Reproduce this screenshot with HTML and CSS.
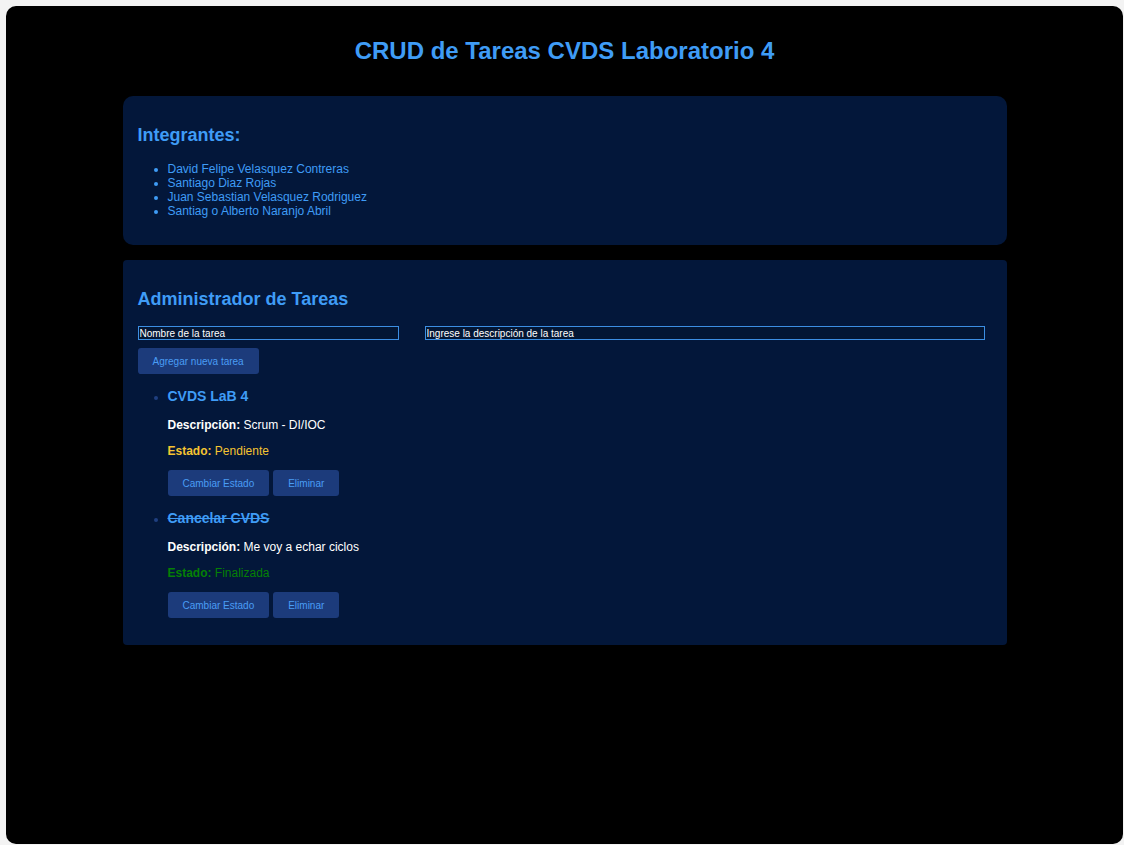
FILE: index.html
```html
<!DOCTYPE html>
<html lang="es">
<head>
<meta charset="utf-8">
<title>CRUD de Tareas</title>
<link rel="stylesheet" href="styles.css">
</head>
<body>
<div class="app">
  <h1 class="title">CRUD de Tareas CVDS Laboratorio 4</h1>
  <section class="card card-round">
    <h3 class="card-title">Integrantes:</h3>
    <ul class="members">
      <li>David Felipe Velasquez Contreras</li>
      <li>Santiago Diaz Rojas</li>
      <li>Juan Sebastian Velasquez Rodriguez</li>
      <li>Santiag o Alberto Naranjo Abril</li>
    </ul>
  </section>
  <section class="card">
    <h3 class="card-title">Administrador de Tareas</h3>
    <div class="form">
      <input class="input input-name" type="text" value="Nombre de la tarea">
      <input class="input input-desc" type="text" value="Ingrese la descripción de la tarea">
    </div>
    <button class="btn">Agregar nueva tarea</button>
    <ul class="tasks">
      <li class="task">
        <h4 class="task-title">CVDS LaB 4</h4>
        <p class="task-desc"><strong>Descripción:</strong> Scrum - DI/IOC</p>
        <p class="task-state pending"><strong>Estado:</strong> Pendiente</p>
        <div class="actions">
          <button class="btn">Cambiar Estado</button>
          <button class="btn">Eliminar</button>
        </div>
      </li>
      <li class="task">
        <h4 class="task-title done">Cancelar CVDS</h4>
        <p class="task-desc"><strong>Descripción:</strong> Me voy a echar ciclos</p>
        <p class="task-state finished"><strong>Estado:</strong> Finalizada</p>
        <div class="actions">
          <button class="btn">Cambiar Estado</button>
          <button class="btn">Eliminar</button>
        </div>
      </li>
    </ul>
  </section>
</div>
</body>
</html>
```
FILE: styles.css
```css
html, body {
  margin: 0;
  padding: 0;
  background: #f3f3f3;
}
body {
  padding: 6px 1px 1px 6px;
  font-family: "Liberation Sans", Arial, sans-serif;
}
.app {
  background: #000;
  height: 838px;
  border-radius: 10px;
  display: flow-root;
  box-sizing: border-box;
}
.title {
  margin: 31px 0 0;
  text-align: center;
  font-size: 24px;
  line-height: 28px;
  font-weight: bold;
  color: #3f9cf6;
}
.card {
  width: 884px;
  box-sizing: border-box;
  margin: 0 auto;
  background: #03173a;
  border-radius: 4px;
  padding: 11px 15px 15px;
  display: flow-root;
}
.card-round {
  margin-top: 31px;
  margin-bottom: 15px;
  border-radius: 10px;
}
.card-title {
  margin: 18px 0 16px;
  font-size: 18px;
  line-height: 21px;
  font-weight: bold;
  color: #3f9cf6;
}
.members {
  margin: 12px 0;
  padding-left: 30px;
  font-size: 12px;
  line-height: 14px;
  color: #3f9cf6;
}
.form {
  display: flex;
  gap: 26px;
}
.input {
  box-sizing: border-box;
  height: 14px;
  margin: 0;
  padding: 0 1px;
  border: 1px solid #3c8ee2;
  background: #031634;
  color: #fff;
  font-family: "Liberation Sans", Arial, sans-serif;
  font-size: 10px;
  line-height: 12px;
  outline: none;
}
.input-name { width: 261px; }
.input-desc { width: 560px; }
.btn {
  height: 26px;
  margin: 0;
  padding: 0 15px;
  border: none;
  border-radius: 3px;
  background: #1c3b7b;
  color: #4a9df5;
  font-family: "Liberation Sans", Arial, sans-serif;
  font-size: 10px;
  cursor: pointer;
}
.form + .btn {
  margin-top: 8px;
  display: block;
}
.tasks {
  margin: 12px 0;
  padding-left: 30px;
  color: #1f3f80;
  font-size: 12px;
}
.task-title {
  margin: 14px 0;
  font-size: 14px;
  line-height: 16px;
  font-weight: bold;
  color: #3f9cf6;
}
.task-title.done {
  text-decoration: line-through;
}
.task-desc, .task-state {
  margin: 12px 0;
  font-size: 12px;
  line-height: 14px;
}
.task-desc { color: #fff; }
.pending { color: #f5c431; }
.finished { color: #058005; }
.actions {
  display: flex;
  gap: 4px;
}
```
